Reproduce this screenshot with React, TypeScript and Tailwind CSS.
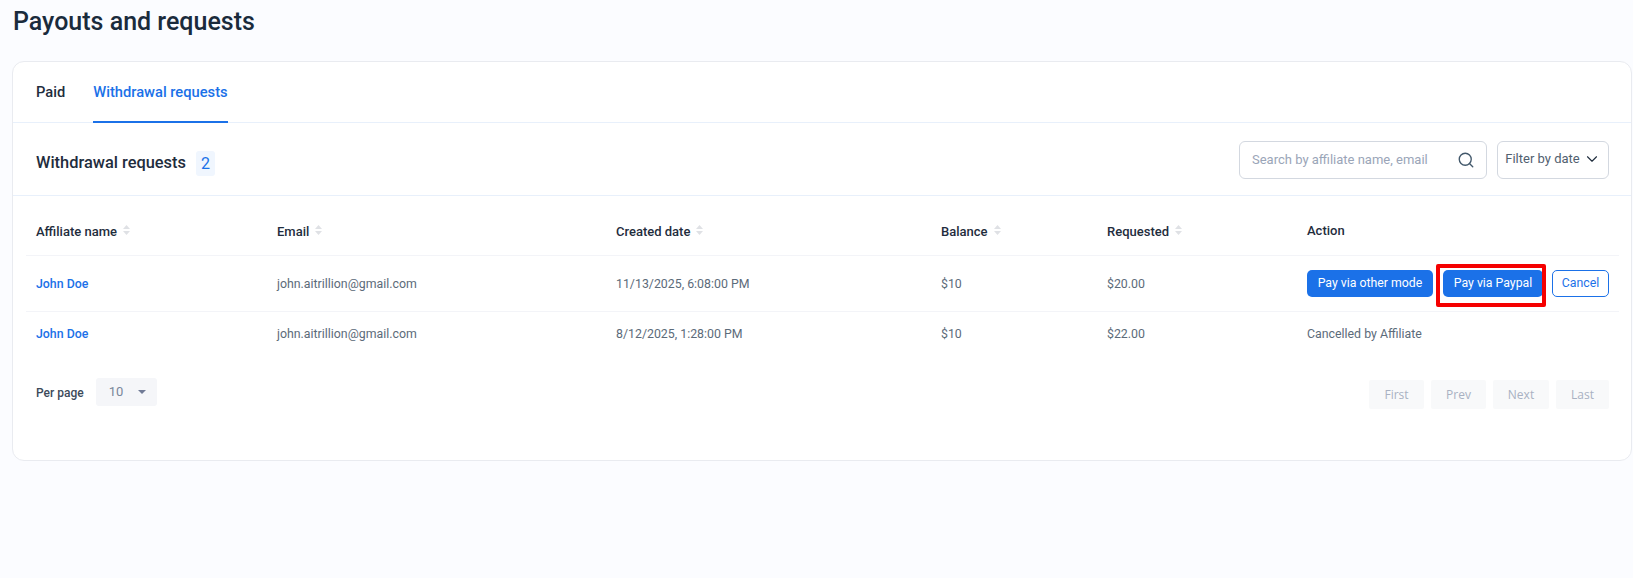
import { ChevronDown, Search } from 'lucide-react'

const COLS = 'grid grid-cols-[241px_339px_325px_166px_200px_1fr] items-center pl-[10px]'

function SortIcon() {
  return (
    <svg width="7" height="10" viewBox="0 0 7 10" className="ml-[6px] inline-block align-[1px]">
      <path d="M3.5 0L7 4H0z" fill="#dfe1e5" />
      <path d="M3.5 10L0 6h7z" fill="#dfe1e5" />
    </svg>
  )
}

function Head({ label, sort = true }: { label: string; sort?: boolean }) {
  return (
    <div className={`text-[13px] font-medium text-[#1f2d3d] ${sort ? 'pt-[12px]' : 'pt-[10px]'}`}>
      {label}
      {sort && <SortIcon />}
    </div>
  )
}

function Row({ date, amount, children, last }: { date: string; amount: string; children: React.ReactNode; last?: boolean }) {
  return (
    <div className={`${COLS} text-[12.35px] text-[#5c6b7a] ${last ? 'h-[45px] pb-[1px]' : 'h-[56px] border-b border-[#f3f4f8] pt-[2px]'}`}>
      <div className="font-medium text-[#1b71e8]">John Doe</div>
      <div>john.aitrillion@gmail.com</div>
      <div>{date}</div>
      <div>$10</div>
      <div>{amount}</div>
      {children}
    </div>
  )
}

export default function App() {
  return (
    <div className="min-h-[578px] bg-[#fbfcff] pl-[12px] pr-[1px] font-['Roboto',sans-serif]">
      <h1 className="h-[61px] pl-[1px] pt-[6px] text-[25px] leading-[32px] font-medium text-[#1a2b3c]">Payouts and requests</h1>

      <div className="h-[400px] rounded-[12px] border border-[#e9ebf0] bg-white">
        <div className="flex h-[61px] gap-[28px] border-b border-[#e8f0fb] pl-[23px] text-[14.7px] font-medium">
          <div className="pt-[19px] text-[#1f2d3d]">Paid</div>
          <div className="-mb-px border-b-[2px] border-[#1b71e8] pt-[19px] text-[#1b71e8]">Withdrawal requests</div>
        </div>

        <div className="flex h-[73px] items-center justify-between border-b border-[#e8f0fb] pl-[23px] pr-[22px] pt-[2px]">
          <div className="flex items-center gap-[10px] pt-[6px]">
            <span className="text-[16.4px] font-medium text-[#1f2d3d]">Withdrawal requests</span>
            <span className="mt-[1px] flex h-[25px] w-[19px] items-center justify-center rounded-[3px] bg-[#f0f6fe] text-[16px] text-[#1b71e8]">2</span>
          </div>
          <div className="flex gap-[10px]">
            <div className="flex h-[38px] w-[248px] items-center justify-between rounded-[6px] border border-[#d3d8e0] pl-[12px] pr-[11px] text-[13px] text-[#9aa5b8]">
              Search by affiliate name, email
              <Search size={18} strokeWidth={1.8} className="text-[#42586b]" />
            </div>
            <div className="flex h-[38px] w-[112px] items-center justify-center gap-[3px] rounded-[6px] border border-[#d3d8e0] pb-[2px] text-[13px] text-[#51606f]">
              Filter by date
              <ChevronDown size={18} strokeWidth={1.5} className="text-[#1f2d3d]" />
            </div>
          </div>
        </div>

        <div className="pl-[13px] pr-[12px]">
          <div className={`${COLS} h-[60px] border-b border-[#f3f4f8]`}>
            <Head label="Affiliate name" />
            <Head label="Email" />
            <Head label="Created date" />
            <Head label="Balance" />
            <Head label="Requested" />
            <Head label="Action" sort={false} />
          </div>

          <Row date="11/13/2025, 6:08:00 PM" amount="$20.00">
            <div className="-mt-[2px] flex items-center text-[12.3px]">
              <button className="h-[27px] w-[126px] rounded-[5px] bg-[#1b71e8] text-white">Pay via other mode</button>
              <div className="relative ml-[10px]">
                <button className="block h-[27px] w-[100px] rounded-[5px] bg-[#1b71e8] text-white">Pay via Paypal</button>
                <div className="absolute -left-[7px] -right-[3px] -top-[6px] -bottom-[10px] rounded-[2px] border-[4px] border-[#f50000]" />
              </div>
              <button className="ml-[9px] h-[27px] w-[57px] rounded-[5px] border border-[#1b71e8] text-[#1b71e8]">Cancel</button>
            </div>
          </Row>
          <Row date="8/12/2025, 1:28:00 PM" amount="$22.00" last>
            <div>Cancelled by Affiliate</div>
          </Row>
        </div>

        <div className="flex items-start justify-between pl-[23px] pr-[22px] pt-[21px]">
          <div className="flex items-center text-[12px]">
            <span className="pt-[2px] font-medium text-[#3c4a5a]">Per page</span>
            <div className="ml-[12px] flex h-[28px] w-[61px] items-center justify-between rounded-[3px] bg-[#f5f6f9] pl-[13px] pr-[11px] text-[13px] text-[#7a8799]">
              10
              <span className="h-0 w-0 border-x-[4px] border-t-[4px] border-x-transparent border-t-[#717b96]" />
            </div>
          </div>
          <div className="mt-[2px] flex gap-[7px] font-['Open_Sans',sans-serif] text-[12px] text-[#a8b1c2]">
            <div className="flex h-[29px] w-[55px] items-center justify-center rounded-[2px] bg-[#f8f9fa]">First</div>
            <div className="flex h-[29px] w-[55px] items-center justify-center rounded-[2px] bg-[#f8f9fa]">Prev</div>
            <div className="flex h-[29px] w-[56px] items-center justify-center rounded-[2px] bg-[#f8f9fa]">Next</div>
            <div className="flex h-[29px] w-[53px] items-center justify-center rounded-[2px] bg-[#f8f9fa]">Last</div>
          </div>
        </div>
      </div>
    </div>
  )
}
